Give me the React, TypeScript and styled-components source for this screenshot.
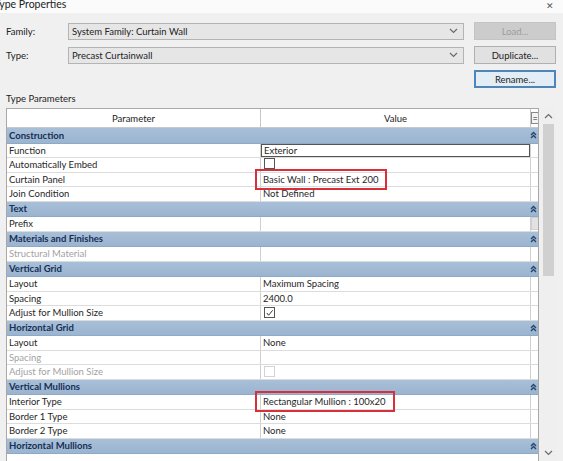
import React from "react";
import styled, { createGlobalStyle, css } from "styled-components";

const GlobalStyle = createGlobalStyle`
  html, body {
    margin: 0;
    padding: 0;
    background: #f0f0f0;
  }
  body {
    font-family: Lato, "Open Sans", "Liberation Sans", sans-serif;
    font-size: 9.5px;
    color: #1e1e1e;
  }
`;

type Row =
  | { kind: "group"; label: string }
  | {
      kind: "data";
      label: string;
      value?: string;
      disabled?: boolean;
      editor?: "text" | "check" | "checked" | "uncheck" | "stub";
      highlight?: boolean;
    };

const rows: Row[] = [
  { kind: "group", label: "Construction" },
  { kind: "data", label: "Function", value: "Exterior", editor: "text" },
  { kind: "data", label: "Automatically Embed", editor: "check" },
  { kind: "data", label: "Curtain Panel", value: "Basic Wall : Precast Ext 200", highlight: true },
  { kind: "data", label: "Join Condition", value: "Not Defined" },
  { kind: "group", label: "Text" },
  { kind: "data", label: "Prefix", editor: "stub" },
  { kind: "group", label: "Materials and Finishes" },
  { kind: "data", label: "Structural Material", disabled: true },
  { kind: "group", label: "Vertical Grid" },
  { kind: "data", label: "Layout", value: "Maximum Spacing" },
  { kind: "data", label: "Spacing", value: "2400.0" },
  { kind: "data", label: "Adjust for Mullion Size", editor: "checked" },
  { kind: "group", label: "Horizontal Grid" },
  { kind: "data", label: "Layout", value: "None" },
  { kind: "data", label: "Spacing", disabled: true },
  { kind: "data", label: "Adjust for Mullion Size", disabled: true, editor: "uncheck" },
  { kind: "group", label: "Vertical Mullions" },
  { kind: "data", label: "Interior Type", value: "Rectangular Mullion : 100x20", highlight: true },
  { kind: "data", label: "Border 1 Type", value: "None" },
  { kind: "data", label: "Border 2 Type", value: "None" },
  { kind: "group", label: "Horizontal Mullions" },
];

const Chevron = ({ up = false }: { up?: boolean }) => (
  <svg width="9" height="6" viewBox="0 0 9 6">
    <path
      d={up ? "M1 5 L4.5 1.5 L8 5" : "M1 1 L4.5 4.5 L8 1"}
      fill="none"
      stroke="#6a6a6a"
      strokeWidth="1.2"
    />
  </svg>
);

const Collapse = () => (
  <svg width="7" height="8" viewBox="0 0 7 8">
    <path d="M1 4 L3.5 1.5 L6 4 M1 7 L3.5 4.5 L6 7" fill="none" stroke="#24446b" strokeWidth="1.4" />
  </svg>
);

const Tick = () => (
  <svg width="10" height="10" viewBox="0 0 10 10">
    <path d="M2 5 L4 7.5 L8.5 2" fill="none" stroke="#333" strokeWidth="1.1" />
  </svg>
);

const App = () => (
  <>
    <GlobalStyle />
    <Window>
      <TitleBar>
        <Title>Type Properties</Title>
        <Close>✕</Close>
      </TitleBar>

      <Form>
        <Label>Family:</Label>
        <Combo>
          <span>System Family: Curtain Wall</span>
          <Chevron />
        </Combo>
        <Button disabled>Load...</Button>

        <Label>Type:</Label>
        <Combo>
          <span>Precast Curtainwall</span>
          <Chevron />
        </Combo>
        <Button>Duplicate...</Button>

        <Spacer />
        <Spacer />
        <Button focused>Rename...</Button>
      </Form>

      <SectionLabel>Type Parameters</SectionLabel>

      <TableArea>
        <Grid>
          <HeaderRow>
            <HeadCell>Parameter</HeadCell>
            <HeadCell>Value</HeadCell>
            <EqCell>=</EqCell>
          </HeaderRow>
          {rows.map((r, i) =>
            r.kind === "group" ? (
              <GroupRow key={i}>
                <span>{r.label}</span>
                <IconCell>
                  <Collapse />
                </IconCell>
              </GroupRow>
            ) : (
              <DataRow key={i}>
                <ParamCell disabled={r.disabled}>{r.label}</ParamCell>
                <ValueCell>
                  {r.editor === "text" && <TextEditor>{r.value}</TextEditor>}
                  {r.editor === "check" && <CheckBox top />}
                  {r.editor === "checked" && (
                    <CheckBox>
                      <Tick />
                    </CheckBox>
                  )}
                  {r.editor === "uncheck" && <CheckBox faded />}
                  {!r.editor && (r.highlight ? <Marked>{r.value}</Marked> : r.value)}
                </ValueCell>
                <SideCell>{r.editor === "stub" && <Stub />}</SideCell>
              </DataRow>
            )
          )}
        </Grid>
        <Scrollbar>
          <Arrow>
            <Chevron up />
          </Arrow>
          <Track>
            <Thumb />
          </Track>
          <Arrow>
            <Chevron />
          </Arrow>
        </Scrollbar>
      </TableArea>
    </Window>
  </>
);

const Window = styled.div`
  width: 563px;
  height: 461px;
  overflow: hidden;
  display: flex;
  flex-direction: column;
  background: #f0f0f0;
`;

const TitleBar = styled.div`
  height: 13px;
  background: #fbfbfb;
  display: flex;
  justify-content: space-between;
  align-items: flex-start;
  overflow: hidden;
`;

const Title = styled.div`
  font-size: 10.5px;
  line-height: 12px;
  margin-top: -2px;
  margin-left: -6px;
  color: #222;
`;

const Close = styled.div`
  font-size: 9px;
  line-height: 12px;
  color: #555;
  margin: 0 9px 0 0;
`;

const Form = styled.div`
  display: grid;
  grid-template-columns: 52px 1fr 82px;
  grid-auto-rows: 18px;
  column-gap: 10px;
  row-gap: 6px;
  padding: 9px 7px 0 6px;
  align-items: center;
`;

const Label = styled.div`
  color: #222;
`;

const Spacer = styled.div``;

const Combo = styled.div`
  height: 17px;
  box-sizing: border-box;
  border: 1px solid #b4b4b4;
  background: #e6e6e6;
  display: flex;
  align-items: center;
  justify-content: space-between;
  padding: 0 5px 0 3px;
  color: #222;
`;

const Button = styled.div<{ disabled?: boolean; focused?: boolean }>`
  height: 18px;
  box-sizing: border-box;
  display: flex;
  align-items: center;
  justify-content: center;
  border: 1px solid #b0b0b0;
  background: #e1e1e1;
  color: #222;
  ${(p) =>
    p.disabled &&
    css`
      background: #cccccc;
      border-color: #c4c4c4;
      color: #9c9c9c;
    `}
  ${(p) =>
    p.focused &&
    css`
      background: #e3edf6;
      border: 2px solid #4f86b8;
    `}
`;

const SectionLabel = styled.div`
  padding: 5px 0 0 6px;
  height: 12px;
  line-height: 12px;
  color: #222;
`;

const TableArea = styled.div`
  display: flex;
  padding: 3px 7px 0 6px;
  gap: 2px;
  flex: 1;
  min-height: 0;
`;

const Grid = styled.div`
  width: 534px;
  box-sizing: border-box;
  border: 1px solid #a8a8a8;
  border-bottom: none;
  background: #fff;
  display: flex;
  flex-direction: column;
  overflow: hidden;
`;

const HeaderRow = styled.div`
  display: grid;
  grid-template-columns: 254px 270px 8px;
  height: 18px;
  border-bottom: 1px solid #c8c8c8;
  flex: none;
`;

const HeadCell = styled.div`
  display: flex;
  align-items: center;
  justify-content: center;
  border-right: 1px solid #c8c8c8;
  color: #222;
`;

const EqCell = styled.div`
  display: flex;
  align-items: center;
  justify-content: center;
  font-size: 9px;
  line-height: 9px;
  border: 1px solid #888;
  margin: 3px 0;
  background: #f4f4f4;
`;

const GroupRow = styled.div`
  flex: none;
  height: 15.5px;
  box-sizing: border-box;
  display: flex;
  align-items: center;
  justify-content: space-between;
  padding-left: 2px;
  background: linear-gradient(#a8bfd8, #9bb4cf);
  border-bottom: 1px solid #8ea9c6;
  font-weight: 700;
  color: #152f55;
`;

const IconCell = styled.div`
  width: 9px;
  display: flex;
  justify-content: center;
`;

const DataRow = styled.div`
  flex: none;
  height: 14.5px;
  box-sizing: border-box;
  display: grid;
  grid-template-columns: 254px 270px 8px;
  border-bottom: 1px solid #dcdcdc;
`;

const ParamCell = styled.div<{ disabled?: boolean }>`
  display: flex;
  align-items: center;
  padding-left: 2px;
  border-right: 1px solid #d0d0d0;
  color: ${(p) => (p.disabled ? "#a2a2a2" : "#262626")};
  white-space: nowrap;
`;

const ValueCell = styled.div`
  display: flex;
  align-items: center;
  padding-left: 2px;
  border-right: 1px solid #d0d0d0;
  color: #262626;
  white-space: nowrap;
`;

/* red annotation box drawn over the grid */
const Marked = styled.span`
  position: relative;
  &::after {
    content: "";
    position: absolute;
    left: -8px;
    right: -9px;
    top: -5px;
    bottom: -5px;
    border: 2px solid #d8303a;
  }
`;

const SideCell = styled.div`
  display: flex;
  align-items: center;
  justify-content: center;
`;

const Stub = styled.div`
  width: 7px;
  height: 11px;
  background: #e2e2e2;
  border: 1px solid #cfcfcf;
`;

const TextEditor = styled.div`
  flex: 1;
  align-self: stretch;
  margin-left: -2px;
  padding-left: 2px;
  display: flex;
  align-items: center;
  border: 1px solid #555;
`;

const CheckBox = styled.div<{ faded?: boolean; top?: boolean }>`
  width: 11px;
  height: 11px;
  box-sizing: border-box;
  margin-left: 1px;
  align-self: ${(p) => (p.top ? "flex-start" : "center")};
  border: 1px solid ${(p) => (p.faded ? "#d4d4d4" : "#555")};
  display: flex;
  align-items: center;
  justify-content: center;
  background: #fff;
`;

const Scrollbar = styled.div`
  width: 15px;
  display: flex;
  flex-direction: column;
  background: #efefef;
`;

const Arrow = styled.div`
  height: 16px;
  flex: none;
  display: flex;
  align-items: center;
  justify-content: center;
`;

const Track = styled.div`
  flex: 1;
  padding: 0 2px;
`;

const Thumb = styled.div`
  height: 152px;
  background: #d0d0d0;
`;

export default App;
